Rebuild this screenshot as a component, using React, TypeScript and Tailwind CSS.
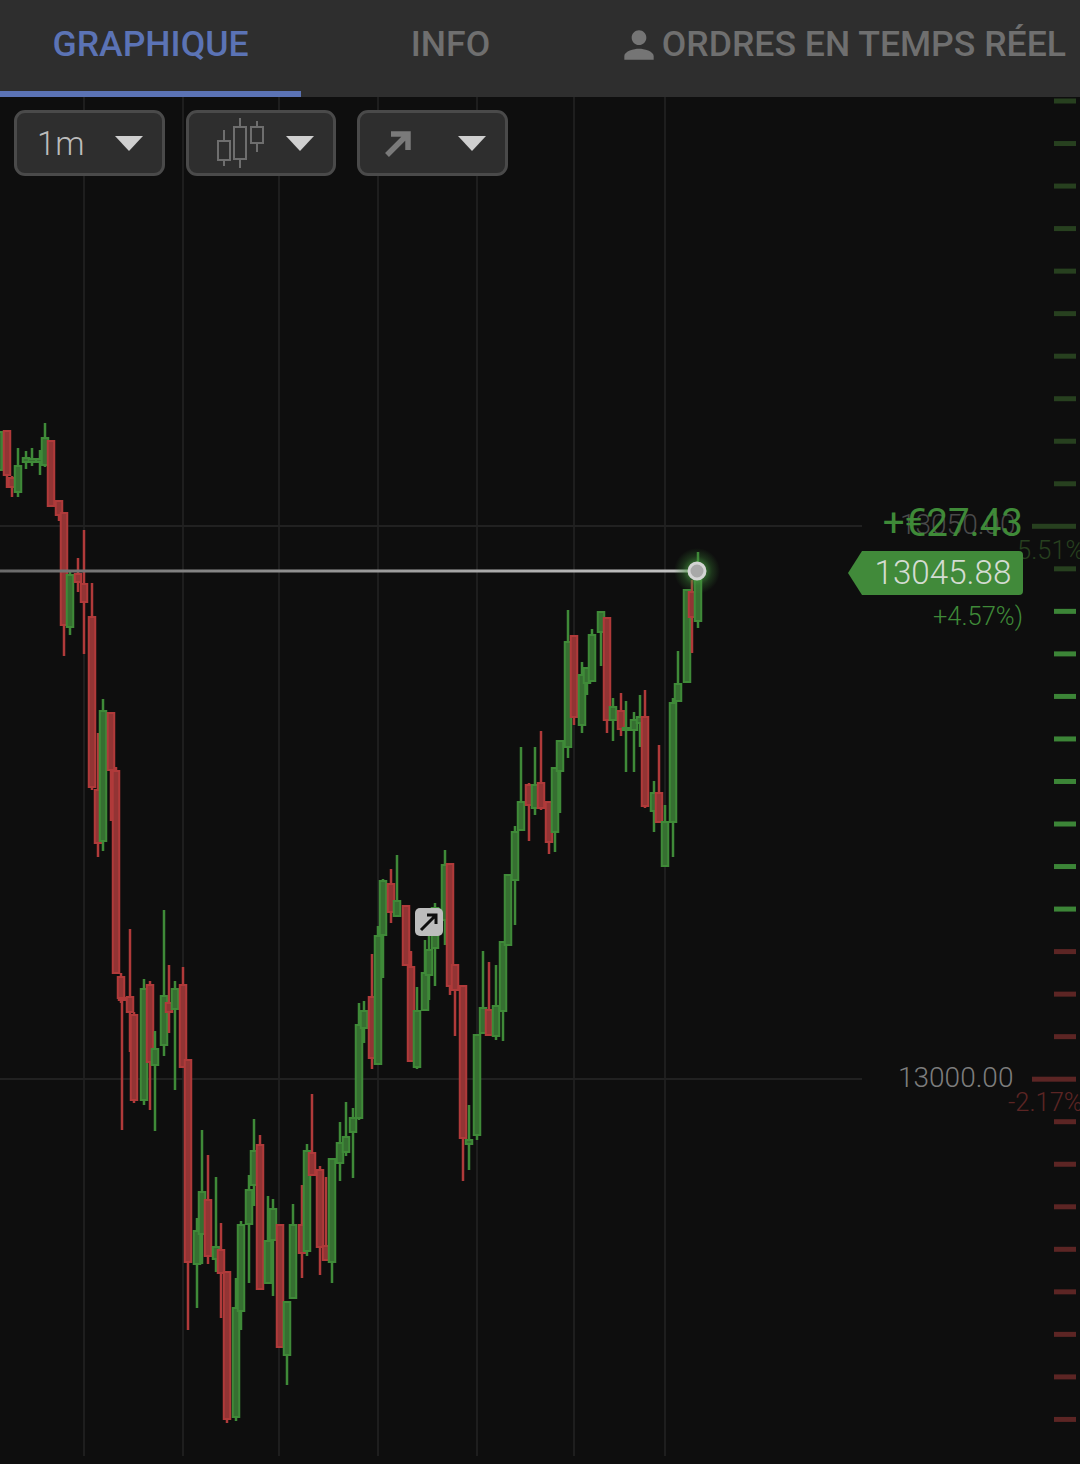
const C: [number, number, number, number, number, "r" | "g"][] = [
  [-1,432,470,432,470,"g"],[7,431,475,431,488,"r"],[12,478,487,476,497,"r"],[18,466,492,448,497,"g"],[26,458,462,451,469,"g"],[32,459,462,448,466,"g"],[40,459,462,450,475,"g"],[45,438,465,423,467,"g"],[51,441,506,441,507,"r"],[59,501,515,500,521,"r"],[64,513,625,513,656,"r"],[70,575,627,572,635,"g"],[78,574,582,558,592,"r"],[84,584,602,530,654,"r"],[92,617,787,583,790,"r"],
  [98,790,843,733,857,"r"],[103,711,841,699,851,"g"],[111,713,770,713,821,"r"],[116,771,973,767,973,"r"],[121,977,998,973,1003,"r"],[130,997,1012,929,1052,"r"],[122,998,1000,998,1130,"r"],[134,1015,1100,1012,1103,"r"],[144,989,1100,979,1105,"g"],[150,985,1062,981,1110,"r"],[155,1049,1065,1031,1131,"g"],[164,996,1045,910,1056,"g"],[169,1003,1012,965,1033,"r"],[175,989,1009,981,1090,"g"],[183,985,1067,967,1067,"r"],
  [188,1060,1262,1060,1330,"r"],[197,1231,1264,1218,1308,"g"],[202,1192,1234,1130,1264,"g"],[208,1200,1256,1155,1264,"r"],[216,1247,1259,1177,1272,"g"],[221,1250,1273,1223,1318,"r"],[227,1272,1419,1272,1423,"r"],[236,1308,1417,1278,1421,"g"],[241,1225,1311,1221,1330,"g"],[249,1190,1224,1175,1283,"g"],[254,1151,1185,1119,1206,"g"],[260,1145,1289,1135,1289,"r"],[268,1241,1283,1196,1283,"g"],[273,1209,1240,1199,1296,"g"],[280,1225,1347,1225,1347,"r"],[287,1302,1355,1302,1385,"g"],[293,1225,1298,1204,1298,"g"],[302,1225,1253,1185,1278,"r"],[307,1151,1251,1144,1256,"g"],[312,1153,1175,1094,1175,"r"],[320,1170,1247,1166,1275,"r"],[326,1246,1260,1177,1260,"r"],[332,1159,1262,1159,1283,"g"],[340,1143,1163,1122,1181,"g"],[346,1137,1152,1102,1156,"g"],[353,1118,1132,1108,1178,"g"],
  [359,1025,1118,1003,1120,"g"],[364,1011,1028,1001,1043,"g"],[372,997,1058,954,1069,"r"],[378,936,1064,926,1064,"g"],[383,881,935,879,978,"g"],[391,884,912,869,923,"r"],[397,901,916,855,917,"g"],[406,906,965,906,966,"r"],[411,967,1061,951,1061,"r"],[417,1011,1067,987,1069,"g"],[425,973,1010,940,1011,"g"],[429,950,975,920,1000,"g"],[435,908,948,903,986,"g"],[445,865,920,850,945,"g"],[450,864,986,864,995,"r"],[455,965,990,965,1036,"r"],[463,986,1138,986,1181,"r"],[469,1140,1144,1105,1170,"g"],[477,1035,1135,1035,1140,"g"],[483,1008,1033,951,1034,"g"],[489,1010,1035,962,1036,"r"],[496,1006,1036,965,1040,"g"],[503,942,1011,942,1041,"g"],[508,875,945,875,946,"g"],
  [515,832,880,826,925,"g"],[521,802,830,747,830,"g"],[529,785,805,783,841,"r"],[535,785,808,747,815,"g"],[541,783,808,731,810,"r"],[549,802,842,802,854,"r"],[555,768,832,768,852,"g"],[560,741,771,741,813,"g"],[568,642,747,610,758,"g"],[574,636,717,636,725,"r"],[582,675,725,662,733,"g"],[587,668,683,668,695,"g"],[592,635,681,629,682,"g"],[601,612,632,612,666,"g"],[607,618,720,618,733,"r"],[613,707,720,698,741,"g"],[621,711,729,693,736,"r"],[626,728,730,701,772,"g"],[634,720,730,712,772,"g"],[640,717,723,695,747,"g"],[645,717,806,690,808,"r"],[654,793,811,781,832,"g"],[659,793,822,745,822,"r"],[665,822,866,805,866,"g"],[673,703,822,698,857,"g"],[678,684,701,651,702,"g"],[687,590,682,590,683,"g"],[692,592,617,580,653,"r"],[698,571,621,552,628,"g"],
];

const gridX = [84, 183, 279, 378, 477, 574, 665];
const ticks = Array.from({ length: 32 }, (_, i) => 101 + i * 42.53);

function tickColor(y: number) {
  if (y < 590) return "#27401f";
  if (y < 930) return "#3c8537";
  return "#5c2524";
}

function Caret() {
  return <span className="w-0 h-0 border-x-[14px] border-x-transparent border-t-[15px] border-t-[#cfcfcf]" />;
}

function Dropdown({ children }: { children: React.ReactNode }) {
  return (
    <div className="w-[150.5px] h-[66px] rounded-[11px] border-[3px] border-[#4a4a4a] bg-[#2e2e2e] flex items-center justify-between pl-[20px] pr-[19px]">
      <div className="flex items-center">{children}</div>
      <Caret />
    </div>
  );
}

export default function App() {
  return (
    <div className="w-[1080px] h-[1464px] bg-[#0e0e0e] overflow-hidden flex flex-col font-['Roboto',sans-serif]">
      <div className="h-[97px] bg-[#2e2e2e] flex shrink-0 text-[35.6px] font-medium text-[#6f6f6f]">
        <div className="w-[301px] border-b-[6px] border-[#5b73b5] text-[#5b73b5] flex items-center justify-center pb-[2px]">GRAPHIQUE</div>
        <div className="w-[299px] border-b-[6px] border-transparent flex items-center justify-center pb-[2px]">INFO</div>
        <div className="flex-1 border-b-[6px] border-transparent flex items-center justify-end pr-[14px] pb-[2px] whitespace-nowrap">
          <svg viewBox="0 0 24 24" className="w-[44px] h-[44px] mr-[1px]" fill="#757575">
            <path d="M12 12c2.21 0 4-1.79 4-4s-1.79-4-4-4-4 1.79-4 4 1.79 4 4 4zm0 2c-2.67 0-8 1.34-8 4v2h16v-2c0-2.66-5.33-4-8-4z" />
          </svg>
          <span>ORDRES EN TEMPS RÉEL</span>
        </div>
      </div>

      <div className="relative flex-1">
        <svg viewBox="0 97 1080 1367" className="w-[1080px] h-[1367px] block">
          {gridX.map((x) => (
            <rect key={x} x={x - 1} y={97} width={2} height={1359} fill="#1e1e1e" />
          ))}
          <rect x={0} y={525} width={862} height={2} fill="#212121" />
          <rect x={0} y={1078} width={862} height={2} fill="#212121" />
          {ticks.map((y, i) => {
            const long = i === 10 || i === 23;
            return <rect key={i} x={long ? 1032 : 1054} y={y - 2.5} width={long ? 44 : 22} height={5} fill={tickColor(y)} />;
          })}
          {C.map(([x, top, bot, wt, wb, c], i) => {
            const stroke = c === "r" ? "#b03a3a" : "#3f8a38";
            const fill = c === "r" ? "#923434" : "#366f31";
            return (
              <g key={i}>
                <rect x={x - 1.25} y={wt} width={2.5} height={wb - wt} fill={stroke} />
                <rect x={x - 3.25} y={top} width={6.5} height={bot - top} fill={fill} stroke={stroke} strokeWidth={2} />
              </g>
            );
          })}
          <defs>
            <linearGradient id="pl" x1="0" x2="1" y1="0" y2="0">
              <stop offset="0" stopColor="#6a6a6a" />
              <stop offset="1" stopColor="#c4c4c4" />
            </linearGradient>
            <radialGradient id="glow">
              <stop offset="0.35" stopColor="#4aa043" stopOpacity="0.65" />
              <stop offset="0.65" stopColor="#3c8537" stopOpacity="0.3" />
              <stop offset="1" stopColor="#3c8537" stopOpacity="0" />
            </radialGradient>
          </defs>
          <rect x={0} y={569.5} width={690} height={3} fill="url(#pl)" />
          <circle cx={697} cy={571} r={23} fill="url(#glow)" />
          <circle cx={697} cy={571} r={8} fill="#a8a8a8" stroke="#d4d4d4" strokeWidth={3} />
        </svg>

        <div className="absolute left-[14px] top-[13px] flex gap-[21px]">
          <Dropdown>
            <span className="text-[33px] font-light text-[#bcbcbc] leading-none">1m</span>
          </Dropdown>
          <Dropdown>
            <svg width="48" height="52" viewBox="0 0 48 52" fill="none" stroke="#6e6e6e" strokeWidth="2" className="ml-[7px]">
              <path d="M8 13v11M8 43v6M24 1v9M24 42v9M41 4v6M41 26v9" />
              <rect x="2" y="24" width="12" height="19" />
              <rect x="18" y="10" width="12" height="32" />
              <rect x="35" y="10" width="12" height="16" />
            </svg>
          </Dropdown>
          <Dropdown>
            <svg width="28" height="28" viewBox="0 0 28 28" fill="none" stroke="#7a7a7a" strokeWidth="5.5" className="ml-[4px]">
              <path d="M3 26 L22 7 M7 5 H24 V21" />
            </svg>
          </Dropdown>
        </div>

        <div className="absolute left-[415px] top-[811px] w-[28px] h-[28px] rounded-[5px] bg-[#bdbdbd] flex items-center justify-center">
          <svg width="20" height="20" viewBox="0 0 20 20" fill="none" stroke="#0e0e0e" strokeWidth="3">
            <path d="M2 18 L17 3 M8 3 H17 V12" />
          </svg>
        </div>

        <span className="absolute left-[900px] top-[410px] text-[28px] leading-[36px] font-light text-[#4a4a4a]">13050.00</span>
        <span className="absolute right-[57px] top-[404px] text-[38.5px] leading-[44px] text-[#3f8a38] whitespace-nowrap">+€27.43</span>
        <span className="absolute left-[1017px] top-[439px] text-[25.5px] leading-[28px] font-light text-[#27401f] whitespace-nowrap">5.51%</span>

        <div className="absolute left-[848px] top-[454px] flex items-center">
          <span className="w-0 h-0 border-y-[22px] border-y-transparent border-r-[14px] border-r-[#418a3a]" />
          <span className="w-[161px] h-[44px] rounded-r-[4px] bg-[#418a3a] text-[33.2px] leading-[43px] font-light text-[#d4dcd2] pl-[12.5px]">13045.88</span>
        </div>

        <span className="absolute right-[57px] top-[505px] text-[25.5px] leading-[28px] font-light text-[#3f8a38] whitespace-nowrap">+4.57%)</span>
        <span className="absolute left-[898px] top-[963px] text-[28px] leading-[36px] font-light text-[#7d7d7d]">13000.00</span>
        <span className="absolute left-[1008px] top-[991px] text-[25.5px] leading-[28px] font-light text-[#5c2524] whitespace-nowrap">-2.17%</span>
      </div>
    </div>
  );
}
